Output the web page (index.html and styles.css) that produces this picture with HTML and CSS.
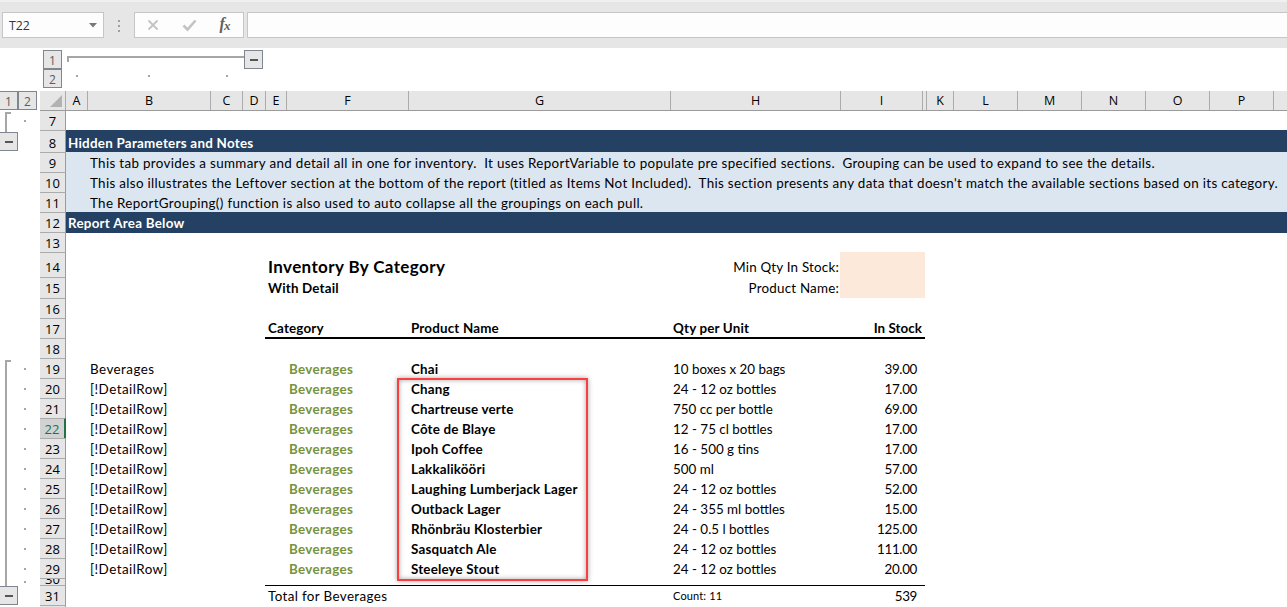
FILE: index.html
```html
<!DOCTYPE html>
<html lang="en">
<head>
<meta charset="utf-8">
<title>Inventory By Category</title>
<link rel="stylesheet" href="styles.css">
</head>
<body>
<header class="formula-bar">
  <div class="name-box"><span>T22</span><svg width="8" height="5"><path d="M0 0h8L4 4.6z" fill="#777"/></svg></div>
  <svg class="grip" width="2" height="12" fill="#a0a0a0"><path d="M0 0h2v2H0zM0 5h2v2H0zM0 10h2v2H0z"/></svg>
  <div class="fx-box">
    <svg width="108" height="24" viewBox="135 13 108 24" fill="none">
      <path d="M148.500 20.500l9 9M157.500 20.500l-9 9" stroke="#c3c3c3" stroke-width="1.800"/>
      <path d="M183.500 25.500l4 4 8-9" stroke="#c3c3c3" stroke-width="2.600"/>
      <text x="219.500" y="29" class="fx-f">f</text><text x="224" y="29.500" class="fx-x">x</text>
    </svg>
  </div>
  <div class="formula-input"></div>
</header>

<svg class="column-outline" width="1287" height="43" viewBox="0 48 1287 43">
  <g class="ol-button"><rect x="43.500" y="50.500" width="18" height="18"/><rect x="43.500" y="69.500" width="18" height="18"/><rect x="244.500" y="50.500" width="18" height="18"/></g>
  <text x="52.500" y="64.500" class="ol-text">1</text><text x="52.500" y="83.500" class="ol-text">2</text>
  <path d="M250 59h8v2h-8z" fill="#555"/>
  <path d="M67 56h177v2H69v4h-2zM76 75h2v2h-2zM148 75h2v2h-2zM226 75h2v2h-2z" fill="#a6a6a6"/>
</svg>

<main class="workspace">
  <svg class="row-outline" width="40" height="516" viewBox="0 91 40 516">
    <g class="ol-button"><rect x="-.5" y="91.500" width="18" height="18"/><rect x="18.500" y="91.500" width="18" height="18"/><rect x="-.5" y="132.500" width="18" height="18"/><rect x="-.5" y="586.500" width="18" height="18"/></g>
    <text x="8.500" y="105.500" class="ol-text">1</text><text x="27.500" y="105.500" class="ol-text">2</text>
    <path d="M5 141h8v2H5zM5 595h8v2H5z" fill="#555"/>
    <path d="M5 112h6v2H7v18H5zM5 360h6v2H7v224H5z" fill="#a6a6a6"/>
    <path d="M24 120h2v2h-2zM24 368h2v2h-2zM24 388h2v2h-2zM24 408h2v2h-2zM24 428h2v2h-2zM24 448h2v2h-2zM24 468h2v2h-2zM24 488h2v2h-2zM24 508h2v2h-2zM24 528h2v2h-2zM24 548h2v2h-2zM24 568h2v2h-2zM24 581h2v2h-2z" fill="#a6a6a6"/>
  </svg>
  <section class="sheet">
    <div class="row heads">
      <div class="corner"><svg width="12" height="12"><path d="M12 0v12H0z" fill="#b2b2b2"/></svg></div>
      <b>A</b><b>B</b><b>C</b><b>D</b><b>E</b><b>F</b><b>G</b><b>H</b><b>I</b><b></b><b>K</b><b>L</b><b>M</b><b>N</b><b>O</b><b>P</b><b></b>
    </div>
    <div class="row r7"><i>7</i></div>
    <div class="row r8 band"><i>8</i><span class="a">Hidden Parameters and Notes</span></div>
    <div class="row note"><i>9</i><span class="b">This tab provides a summary and detail all in one for inventory.&nbsp; It uses ReportVariable to populate pre specified sections.&nbsp; Grouping can be used to expand to see the details.</span></div>
    <div class="row note"><i>10</i><span class="b">This also illustrates the Leftover section at the bottom of the report (titled as Items Not Included).&nbsp; This section presents any data that doesn't match the available sections based on its category.</span></div>
    <div class="row note"><i>11</i><span class="b">The ReportGrouping() function is also used to auto collapse all the groupings on each pull.</span></div>
    <div class="row band last"><i>12</i><span class="a">Report Area Below</span></div>
    <div class="row"><i>13</i></div>
    <div class="row r14"><i>14</i><span class="e title">Inventory By Category</span><span class="h label">Min Qty In Stock:</span><span class="input"></span></div>
    <div class="row r15"><i>15</i><span class="e bold">With Detail</span><span class="h label">Product Name:</span><span class="input"></span></div>
    <div class="row r16"><i>16</i></div>
    <div class="row r17"><i>17</i><span class="e bold">Category</span><span class="g bold">Product Name</span><span class="h bold">Qty per Unit</span><span class="num bold head">In Stock</span><span class="rule thick"></span></div>
    <div class="row"><i>18</i></div>
    <div class="row"><i>19</i><span class="b wide">Beverages</span><span class="f">Beverages</span><span class="g bold">Chai</span><span class="h">10 boxes x 20 bags</span><span class="num">39.00</span></div>
    <div class="row"><i>20</i><span class="b wide">[!DetailRow]</span><span class="f">Beverages</span><span class="g bold">Chang</span><span class="h">24 - 12 oz bottles</span><span class="num">17.00</span><span class="callout"></span></div>
    <div class="row"><i>21</i><span class="b wide">[!DetailRow]</span><span class="f">Beverages</span><span class="g bold">Chartreuse verte</span><span class="h">750 cc per bottle</span><span class="num">69.00</span></div>
    <div class="row"><i class="active">22</i><span class="b wide">[!DetailRow]</span><span class="f">Beverages</span><span class="g bold">Côte de Blaye</span><span class="h">12 - 75 cl bottles</span><span class="num">17.00</span></div>
    <div class="row"><i>23</i><span class="b wide">[!DetailRow]</span><span class="f">Beverages</span><span class="g bold">Ipoh Coffee</span><span class="h">16 - 500 g tins</span><span class="num">17.00</span></div>
    <div class="row"><i>24</i><span class="b wide">[!DetailRow]</span><span class="f">Beverages</span><span class="g bold">Lakkalikööri</span><span class="h">500 ml</span><span class="num">57.00</span></div>
    <div class="row"><i>25</i><span class="b wide">[!DetailRow]</span><span class="f">Beverages</span><span class="g bold">Laughing Lumberjack Lager</span><span class="h">24 - 12 oz bottles</span><span class="num">52.00</span></div>
    <div class="row"><i>26</i><span class="b wide">[!DetailRow]</span><span class="f">Beverages</span><span class="g bold">Outback Lager</span><span class="h">24 - 355 ml bottles</span><span class="num">15.00</span></div>
    <div class="row"><i>27</i><span class="b wide">[!DetailRow]</span><span class="f">Beverages</span><span class="g bold">Rhönbräu Klosterbier</span><span class="h">24 - 0.5 l bottles</span><span class="num">125.00</span></div>
    <div class="row"><i>28</i><span class="b wide">[!DetailRow]</span><span class="f">Beverages</span><span class="g bold">Sasquatch Ale</span><span class="h">24 - 12 oz bottles</span><span class="num">111.00</span></div>
    <div class="row"><i>29</i><span class="b wide">[!DetailRow]</span><span class="f">Beverages</span><span class="g bold">Steeleye Stout</span><span class="h">24 - 12 oz bottles</span><span class="num">20.00</span></div>
    <div class="row r30"><i>30</i></div>
    <div class="row"><i>31</i><span class="e total">Total for Beverages</span><span class="h count">Count: 11</span><span class="num">539</span><span class="rule thin"></span></div>
    <div class="row r32"><i></i></div>
  </section>
</main>
</body>
</html>
```
FILE: styles.css
```css
* { box-sizing: border-box; }
body {
  margin: 0;
  width: 1287px;
  height: 607px;
  overflow: hidden;
  background: #fff;
  color: #000;
  font: 13.4px/20px Lato, sans-serif;
  font-kerning: normal;
}
svg { display: block; }

.formula-bar {
  display: flex;
  height: 48px;
  padding: 10px 0 0 2px;
  background: #e6e6e6;
  border-top: 2px solid #d4d4d4;
  border-image: linear-gradient(#f0f0f0 50%, #d0d0d0 50%) 2;
}
.name-box, .fx-box, .formula-input {
  height: 26px;
  background: #fdfdfd;
  border: 1px solid #c6c6c6;
}
.name-box {
  display: flex;
  align-items: center;
  justify-content: space-between;
  width: 102px;
  padding: 0 6px 0 6px;
  color: #333;
  font: 12.3px/24px "Open Sans", sans-serif;
}
.name-box span { padding-top: 2px; }
.grip { margin: 8px 14px 0; }
.fx-box { width: 110px; margin-right: 3px; }
.formula-input { flex: 1; border-right: 0; }
.fx-f { font: italic bold 16px "Liberation Serif", serif; fill: #606060; }
.fx-x { font: italic bold 13px "Liberation Serif", serif; fill: #606060; }

.ol-button { fill: #e6e6e6; stroke: #80868f; }
.ol-text { font: 12px "Open Sans", sans-serif; fill: #5c5c5c; text-anchor: middle; }

.workspace { display: flex; }
.sheet { width: 1247px; }
.row {
  position: relative;
  display: grid;
  grid-template-columns: 26px 22px 123px 32px 23px 21px 122px 262px 170px 82px 4px 27px 64px 64px 64px 64px 64px 13px;
  height: 20px;
}
.row > span { grid-row: 1; white-space: pre; line-height: 22px; height: 20px; padding-left: 2px; }
.row > i {
  grid-column: 1;
  grid-row: 1;
  height: 100%;
  overflow: hidden;
  background: #e6e6e6;
  border-top: 1px solid #ababab;
  border-right: 1px solid #9b9b9b;
  text-align: center;
  font: normal 13px/21px "Open Sans", sans-serif;
}
.row > i.active {
  background: #d2d2d2;
  border-right: 2px solid #217346;
  color: #217346;
}
.heads { border-bottom: 1px solid #9b9b9b; background: #e6e6e6; }
.heads b {
  border-right: 1px solid #ababab;
  text-align: center;
  font: normal 12.5px/19px "Open Sans", sans-serif;
}
.heads b:last-child { border-right: 0; }
.corner { border-right: 1px solid #ababab; padding: 4px 0 0 10px; }
.r7 { height: 19px; }
.row.r7 > i { border-top: 0; }
.r8 { height: 22px; }
.row.r8 > span { line-height: 26px; }
.row.r8 > i { line-height: 24px; }
.r14 { height: 25px; }
.row.r14 > span { line-height: 31px; height: 25px; }
.row.r14 > .title { line-height: 29px; }
.row.r14 > i { line-height: 29px; }
.r15 { height: 21px; }
.row.r15 > span { line-height: 23px; height: 21px; }
.row.r16 > i { line-height: 20px; }
.row.r17 > span { line-height: 20px; }
.r30 { height: 7px; }
.row.r30 > i { line-height: 0; }
.r32 { height: 2px; }

.band::before, .note::before {
  content: "";
  grid-column: 2 / -1;
  grid-row: 1;
  background: #244062;
}
.note::before { background: #dce6f1; }
.last::before { height: 21px; }
.band > span { color: #fff; font-weight: 700; letter-spacing: .25px; }
.note > span { letter-spacing: .323px; }

.a { grid-column: 2; }
.b { grid-column: 3; }
.e { grid-column: 6; }
.f { grid-column: 7; color: #76933c; font-weight: 700; letter-spacing: .3px; }
.g { grid-column: 8; }
.h { grid-column: 9; }
.wide { letter-spacing: .46px; }
.total { letter-spacing: .37px; }
.bold, .title { font-weight: 700; letter-spacing: .17px; }
.title { font-size: 17px; letter-spacing: .38px; }
.label { text-align: right; padding-right: 2px; letter-spacing: .2px; }
.num { grid-column: 10; text-align: right; padding-right: 6px; letter-spacing: -.35px; }
.num.head { padding-right: 1px; letter-spacing: .05px; }
.count { font-size: 11px; letter-spacing: .15px; }
.row > .input { grid-column: 10; background: #fde9d9; margin-left: -1px; width: 85px; }
.row > .rule {
  position: absolute;
  left: 225px;
  width: 660px;
  height: 1px;
  background: #000;
}
.row > .thick { top: 19px; height: 2px; }
.row > .thin { top: 0; }
.row > .callout {
  position: absolute;
  left: 357px;
  top: 0;
  width: 191px;
  height: 203px;
  border: 2px solid #f93f40;
  box-shadow: 0 0 5px rgba(0,0,0,.35), inset 0 0 5px rgba(0,0,0,.35);
}
```
